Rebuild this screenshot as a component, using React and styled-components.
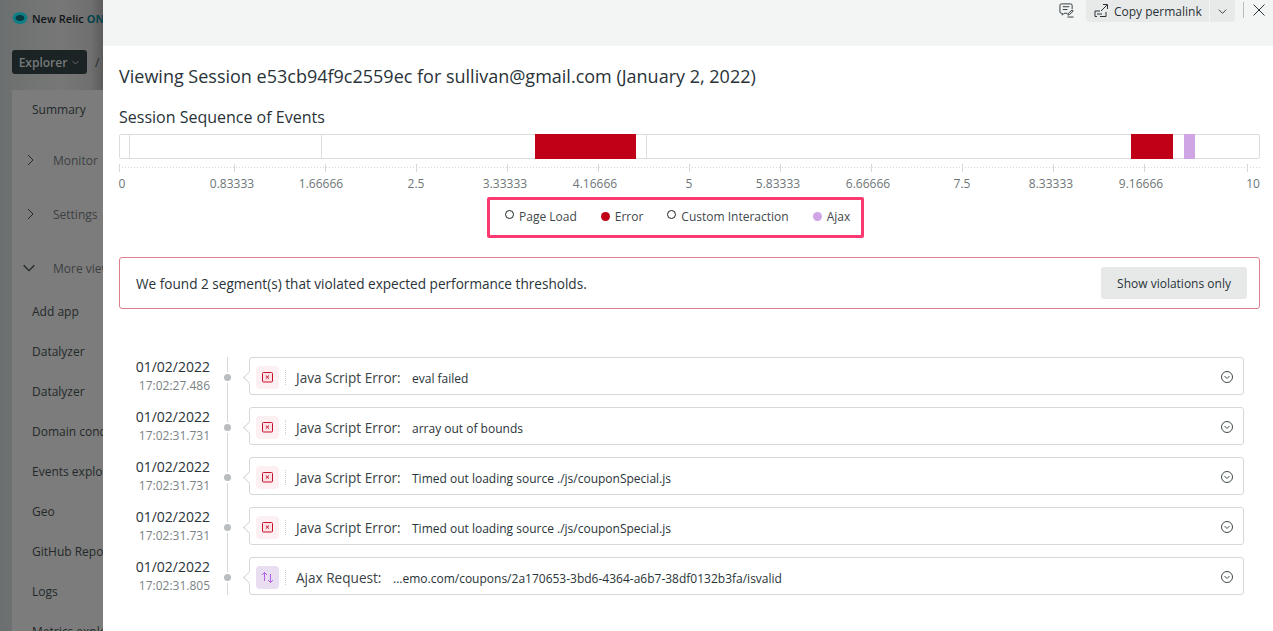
import React from "react";
import styled, { createGlobalStyle } from "styled-components";

const GlobalStyle = createGlobalStyle`
  html, body { margin: 0; padding: 0; height: 100%; }
  body { font-family: "Open Sans", "Liberation Sans", sans-serif; color: #293338; background: #fff; }
`;

const navItems = [
  { label: "Summary", height: 38, after: 5 },
  { label: "Monitor", chevron: "right" },
  { label: "Settings", chevron: "right" },
  { label: "More views", chevron: "down", after: -4 },
  { label: "Add app" },
  { label: "Datalyzer" },
  { label: "Datalyzer" },
  { label: "Domain conditions" },
  { label: "Events explorer" },
  { label: "Geo" },
  { label: "GitHub Repositories" },
  { label: "Logs" },
  { label: "Metrics explorer" },
];

const segments = [
  { start: 129, end: 130, color: "#dcdede" },
  { start: 321, end: 322, color: "#dcdede" },
  { start: 535, end: 636, color: "#bf0016" },
  { start: 646, end: 647, color: "#dcdede" },
  { start: 1131, end: 1173, color: "#bf0016" },
  { start: 1184, end: 1195, color: "#d0a5e6" },
];

const ticks = [
  { x: 119.5, textX: 122, label: "0" },
  { x: 234.5, textX: 232, label: "0.83333" },
  { x: 325.5, textX: 321, label: "1.66666" },
  { x: 416.5, textX: 416, label: "2.5" },
  { x: 507.5, textX: 505, label: "3.33333" },
  { x: 598.5, textX: 595, label: "4.16666" },
  { x: 689.5, textX: 689, label: "5" },
  { x: 780.5, textX: 778, label: "5.83333" },
  { x: 871.5, textX: 868, label: "6.66666" },
  { x: 962.5, textX: 962, label: "7.5" },
  { x: 1053.5, textX: 1051, label: "8.33333" },
  { x: 1144.5, textX: 1141, label: "9.16666" },
  { x: 1247.5, textX: 1253, label: "10" },
];

const legend = [
  { label: "Page Load", hollow: true },
  { label: "Error", color: "#bf0016" },
  { label: "Custom Interaction", hollow: true },
  { label: "Ajax", color: "#d0a5e6" },
];

const events = [
  { time: "17:02:27.486", type: "error", title: "Java Script Error:", value: "eval failed" },
  { time: "17:02:31.731", type: "error", title: "Java Script Error:", value: "array out of bounds" },
  { time: "17:02:31.731", type: "error", title: "Java Script Error:", value: "Timed out loading source ./js/couponSpecial.js" },
  { time: "17:02:31.731", type: "error", title: "Java Script Error:", value: "Timed out loading source ./js/couponSpecial.js" },
  { time: "17:02:31.805", type: "ajax", title: "Ajax Request:", value: "...emo.com/coupons/2a170653-3bd6-4364-a6b7-38df0132b3fa/isvalid" },
];

const Page = styled.div`
  display: flex;
  height: 100vh;
  overflow: hidden;
`;

const Backdrop = styled.aside`
  flex: 0 0 103px;
  width: 103px;
  overflow: hidden;
  white-space: nowrap;
  background: linear-gradient(to right, #6b6f6f 0, #6f7171 12px, #777 60px, #707070 90px, #5c5c5c 103px);
  color: #222829;
`;

const LogoRow = styled.div`
  display: flex;
  align-items: center;
  gap: 4px;
  height: 36px;
  padding-left: 12px;
  font-size: 11px;
  font-weight: 600;
  color: #0f1516;
  svg { flex-shrink: 0; }
`;

const LogoOne = styled.span`
  color: #06434c;
  font-weight: 700;
  margin-left: -1px;
`;

const Crumbs = styled.div`
  display: flex;
  align-items: center;
  gap: 8px;
  margin-top: 14px;
  padding-left: 12px;
  font-size: 12px;
`;

const ExplorerButton = styled.div`
  display: flex;
  flex-shrink: 0;
  align-items: center;
  justify-content: center;
  gap: 4px;
  width: 75px;
  height: 24px;
  border-radius: 3px;
  background: #1b2324;
  color: #767a7a;
  font-weight: 600;
`;

const Nav = styled.nav`
  margin: 16px 0 0 12px;
  background: #7c7c7c;
`;

const NavRow = styled.div`
  display: flex;
  align-items: center;
  height: ${(p) => p.$height}px;
  margin-bottom: ${(p) => p.$after || 0}px;
  padding-left: ${(p) => (p.$section ? 12 : 20)}px;
  font-size: 12px;
  color: ${(p) => (p.$section ? "#3c4041" : "#23292a")};
`;

const NavChevron = styled.span`
  display: flex;
  flex: 0 0 12px;
  min-width: 0;
  justify-content: center;
  margin-right: ${(p) => (p.$open ? 18 : 17)}px;
  margin-left: ${(p) => (p.$open ? -1 : 0)}px;
  svg { flex-shrink: 0; }
`;

const Panel = styled.main`
  flex: 1;
  min-width: 0;
  display: flex;
  flex-direction: column;
  background: #fff;
`;

const TopBar = styled.header`
  flex: 0 0 46px;
  display: flex;
  align-items: flex-start;
  background: #f3f5f5;
  padding-left: 956px;
`;

const IconSlot = styled.span`
  display: flex;
  align-items: center;
  justify-content: center;
  color: #2a3437;
`;

const CommentSlot = styled(IconSlot)`
  width: 15px;
  height: 20px;
  margin-right: 12px;
`;

const PermalinkGroup = styled.div`
  display: flex;
  height: 22px;
  border-radius: 0 0 4px 4px;
  overflow: hidden;
  background: #e8eaea;
`;

const PermalinkButton = styled.div`
  display: flex;
  align-items: center;
  gap: 6px;
  width: 124px;
  padding-left: 8px;
  box-sizing: border-box;
  font-size: 12px;
  color: #293338;
  border-right: 1px solid #f3f5f5;
`;

const MenuButton = styled(IconSlot)`
  width: 25px;
`;

const Divider = styled.span`
  width: 1px;
  height: 16px;
  margin: 2px 0 0 8px;
  background: #b9bdbd;
`;

const CloseSlot = styled(IconSlot)`
  width: 12px;
  height: 20px;
  margin-left: 9px;
`;

const Body = styled.div`
  padding: 0 13px 0 16px;
`;

const Title = styled.h1`
  margin: 18px 0 0;
  font-size: 18px;
  line-height: 24px;
  font-weight: 400;
  color: #293338;
`;

const SectionTitle = styled.h2`
  margin: 18px 0 0;
  font-size: 16px;
  line-height: 22px;
  font-weight: 400;
  color: #293338;
`;

const Track = styled.div`
  position: relative;
  margin-top: 6px;
  height: 25px;
  box-sizing: border-box;
  border: 1px solid #dcdede;
  border-radius: 2px;
`;

const Segment = styled.span`
  position: absolute;
  top: -1px;
  bottom: -1px;
`;

const Axis = styled.svg`
  display: block;
  margin-top: 5px;
  width: 1157px;
  height: 32px;
  margin-left: -16px;
  text {
    font-size: 12px;
    fill: #6e7678;
    font-family: "Open Sans", "Liberation Sans", sans-serif;
  }
`;

const Legend = styled.div`
  display: flex;
  align-items: center;
  white-space: nowrap;
  width: 377px;
  height: 41px;
  box-sizing: border-box;
  margin: 1px 0 0 368px;
  padding: 0 0 2px 15px;
  border: 3px solid #fb3a72;
  border-radius: 2px;
  font-size: 12px;
  color: #3f484b;
`;

const LegendItem = styled.div`
  display: flex;
  align-items: center;
  gap: 5px;
  margin-right: 24px;
`;

const Dot = styled.span`
  width: 9px;
  height: 9px;
  box-sizing: border-box;
  border-radius: 50%;
  background: ${(p) => (p.$hollow ? "#fff" : p.$color)};
  border: ${(p) => (p.$hollow ? "1px solid #1b2324" : "none")};
  transform: translateY(${(p) => (p.$hollow ? -2 : 0)}px);
`;

const Alert = styled.div`
  display: flex;
  align-items: center;
  justify-content: space-between;
  height: 52px;
  box-sizing: border-box;
  margin-top: 19px;
  padding: 0 12px 0 16px;
  border: 1px solid #e07f8b;
  border-radius: 3px;
  font-size: 13.6px;
  color: #293338;
`;

const ViolationsButton = styled.div`
  display: flex;
  align-items: center;
  justify-content: center;
  width: 146px;
  height: 32px;
  border-radius: 3px;
  background: #e7e9e9;
  font-size: 12px;
`;

const Timeline = styled.div`
  display: flex;
  flex-direction: column;
  gap: 12px;
  margin-top: 48px;
`;

const EventRow = styled.div`
  display: grid;
  grid-template-columns: 91px 39px 995px;
  height: 38px;
`;

const Stamp = styled.div`
  display: flex;
  flex-direction: column;
  align-items: flex-end;
  padding-top: 1px;
`;

const StampDate = styled.span`
  font-size: 14px;
  line-height: 18px;
  color: #293338;
`;

const StampTime = styled.span`
  font-size: 12px;
  line-height: 19px;
  color: #7b8385;
`;

const Rail = styled.div`
  position: relative;
  &::before {
    content: "";
    position: absolute;
    left: 17px;
    top: 0;
    bottom: ${(p) => (p.$last ? 0 : -12)}px;
    width: 1px;
    background: #d5d8d8;
  }
  &::after {
    content: "";
    position: absolute;
    left: 14px;
    top: 17px;
    width: 7px;
    height: 7px;
    border-radius: 50%;
    background: #b9bdbf;
    box-shadow: 0 0 0 2px #fff;
  }
`;

const Card = styled.div`
  position: relative;
  display: flex;
  align-items: center;
  box-sizing: border-box;
  padding: 2px 0 0 6px;
  border: 1px solid #d5d8d8;
  border-radius: 3px;
  background: #fff;
  &::before {
    content: "";
    position: absolute;
    left: -5px;
    top: 15px;
    width: 8px;
    height: 8px;
    background: #fff;
    border-left: 1px solid #d5d8d8;
    border-bottom: 1px solid #d5d8d8;
    transform: rotate(45deg);
  }
`;

const TypeIcon = styled.span`
  position: relative;
  display: flex;
  align-items: center;
  justify-content: center;
  width: 23px;
  height: 23px;
  border-radius: 4px;
  background: ${(p) => (p.$type === "ajax" ? "#e9ddf1" : "#fdf0f2")};
`;

const DottedSep = styled.span`
  height: 15px;
  margin: 0 10px 0 6px;
  border-left: 1px dotted #c9cdcd;
`;

const EventTitle = styled.span`
  font-size: 13.6px;
  color: #3a4346;
  min-width: ${(p) => (p.$type === "ajax" ? 97 : 116)}px;
`;

const EventValue = styled.span`
  font-size: 12px;
  color: #293338;
  margin-top: 2px;
`;

const Expand = styled(IconSlot)`
  margin-left: auto;
  margin-right: 10px;
`;

function ChevronIcon({ dir = "right", size = 12, color = "currentColor" }) {
  const d = dir === "down" ? "M2 4l4 4 4-4" : "M4 1l5 5-5 5";
  return (
    <svg width={size} height={size} viewBox="0 0 12 12" fill="none" stroke={color} strokeWidth="1">
      <path d={d} />
    </svg>
  );
}

function LogoMark() {
  return (
    <svg width="16" height="14" viewBox="0 0 16 14">
      <ellipse cx="8" cy="7" rx="6" ry="4.5" fill="#0a3a40" stroke="#0f7f86" strokeWidth="3" />
    </svg>
  );
}

function CommentEditIcon() {
  return (
    <svg width="16" height="16" viewBox="0 0 16 16" fill="none" stroke="currentColor" strokeWidth="1">
      <path d="M9 11.5H5.5L3.5 13.5V11.5H2.5A1.5 1.5 0 0 1 1 10V3A1.5 1.5 0 0 1 2.5 1.5H12.5A1.5 1.5 0 0 1 14 3V7" />
      <path d="M4 4.5h7M4 7.5h5" />
      <path d="M9.5 13.5l.5-2 4-3.5 1.2 1.2-4 3.6-1.7.7z" />
      <path d="M9 15.5h6.5" />
    </svg>
  );
}

function ShareIcon() {
  return (
    <svg width="14" height="16" viewBox="0 0 14 16" fill="none" stroke="currentColor" strokeWidth="1">
      <path d="M6 8H1v5.5h2M6 13.5h6V9" />
      <path d="M3 11h5" />
      <path d="M7 8l6-6M9 1.5h4.5V6" />
    </svg>
  );
}

function CloseIcon() {
  return (
    <svg width="12" height="12" viewBox="0 0 12 12" fill="none" stroke="currentColor" strokeWidth="1">
      <path d="M.5.5l11 11M11.5.5l-11 11" />
    </svg>
  );
}

function ErrorIcon() {
  return (
    <svg width="11" height="11" viewBox="0 0 11 11" fill="none" stroke="#c8102e" strokeWidth="1">
      <rect x="0.5" y="0.5" width="10" height="9.5" rx="1" fill="#fbe3e6" />
      <path d="M3.8 3.5l3.2 3.2M7 3.5L3.8 6.7" />
    </svg>
  );
}

function AjaxIcon() {
  return (
    <svg width="13" height="13" viewBox="0 0 13 13" fill="none" stroke="#b060e0" strokeWidth="1">
      <path d="M3.5 10V1.5M1 4l2.5-2.5L6 4" />
      <path d="M9.5 3v8.5M7 9l2.5 2.5L12 9" />
    </svg>
  );
}

function ExpandIcon() {
  return (
    <svg width="12" height="12" viewBox="0 0 12 12" fill="none" stroke="currentColor" strokeWidth="0.9">
      <circle cx="6" cy="6" r="5.5" />
      <path d="M3.5 5l2.5 2.5L8.5 5" />
    </svg>
  );
}

function Sidebar() {
  return (
    <Backdrop>
      <LogoRow>
        <LogoMark />
        New Relic <LogoOne>ONE</LogoOne>
      </LogoRow>
      <Crumbs>
        <ExplorerButton>
          Explorer <ChevronIcon dir="down" size={9} />
        </ExplorerButton>
        /
      </Crumbs>
      <Nav>
        {navItems.map((item, i) => (
          <NavRow
            key={i}
            $section={!!item.chevron}
            $height={item.height || (item.chevron ? 54 : 40)}
            $after={item.after}
          >
            {item.chevron && (
              <NavChevron $open={item.chevron === "down"}>
                <ChevronIcon
                  dir={item.chevron}
                  size={item.chevron === "down" ? 16 : 12}
                  color="#23292a"
                />
              </NavChevron>
            )}
            {item.label}
          </NavRow>
        ))}
      </Nav>
    </Backdrop>
  );
}

export default function App() {
  return (
    <Page>
      <GlobalStyle />
      <Sidebar />
      <Panel>
        <TopBar>
          <CommentSlot>
            <CommentEditIcon />
          </CommentSlot>
          <PermalinkGroup>
            <PermalinkButton>
              <ShareIcon /> Copy permalink
            </PermalinkButton>
            <MenuButton>
              <ChevronIcon dir="down" size={11} />
            </MenuButton>
          </PermalinkGroup>
          <Divider />
          <CloseSlot>
            <CloseIcon />
          </CloseSlot>
        </TopBar>
        <Body>
          <Title>Viewing Session e53cb94f9c2559ec for sullivan@gmail.com (January 2, 2022)</Title>
          <SectionTitle>Session Sequence of Events</SectionTitle>
          <Track>
            {segments.map((s, i) => (
              <Segment
                key={i}
                style={{ left: s.start - 120, width: s.end - s.start, background: s.color }}
              />
            ))}
          </Track>
          <Axis viewBox="103 164 1157 32">
            <line x1="119" x2="1260" y1="167.5" y2="167.5" stroke="#d5d8d8" strokeDasharray="1 2" />
            {ticks.map((t) => (
              <React.Fragment key={t.label}>
                <line x1={t.x} x2={t.x} y1="164" y2="172" stroke="#d5d8d8" />
                <text x={t.textX} y="188" textAnchor="middle">{t.label}</text>
              </React.Fragment>
            ))}
          </Axis>
          <Legend>
            {legend.map((l) => (
              <LegendItem key={l.label}>
                <Dot $hollow={l.hollow} $color={l.color} />
                {l.label}
              </LegendItem>
            ))}
          </Legend>
          <Alert>
            We found 2 segment(s) that violated expected performance thresholds.
            <ViolationsButton>Show violations only</ViolationsButton>
          </Alert>
          <Timeline>
            {events.map((e, i) => (
              <EventRow key={i}>
                <Stamp>
                  <StampDate>01/02/2022</StampDate>
                  <StampTime>{e.time}</StampTime>
                </Stamp>
                <Rail $last={i === events.length - 1} />
                <Card>
                  <TypeIcon $type={e.type}>{e.type === "ajax" ? <AjaxIcon /> : <ErrorIcon />}</TypeIcon>
                  <DottedSep />
                  <EventTitle $type={e.type}>{e.title}</EventTitle>
                  <EventValue>{e.value}</EventValue>
                  <Expand>
                    <ExpandIcon />
                  </Expand>
                </Card>
              </EventRow>
            ))}
          </Timeline>
        </Body>
      </Panel>
    </Page>
  );
}
